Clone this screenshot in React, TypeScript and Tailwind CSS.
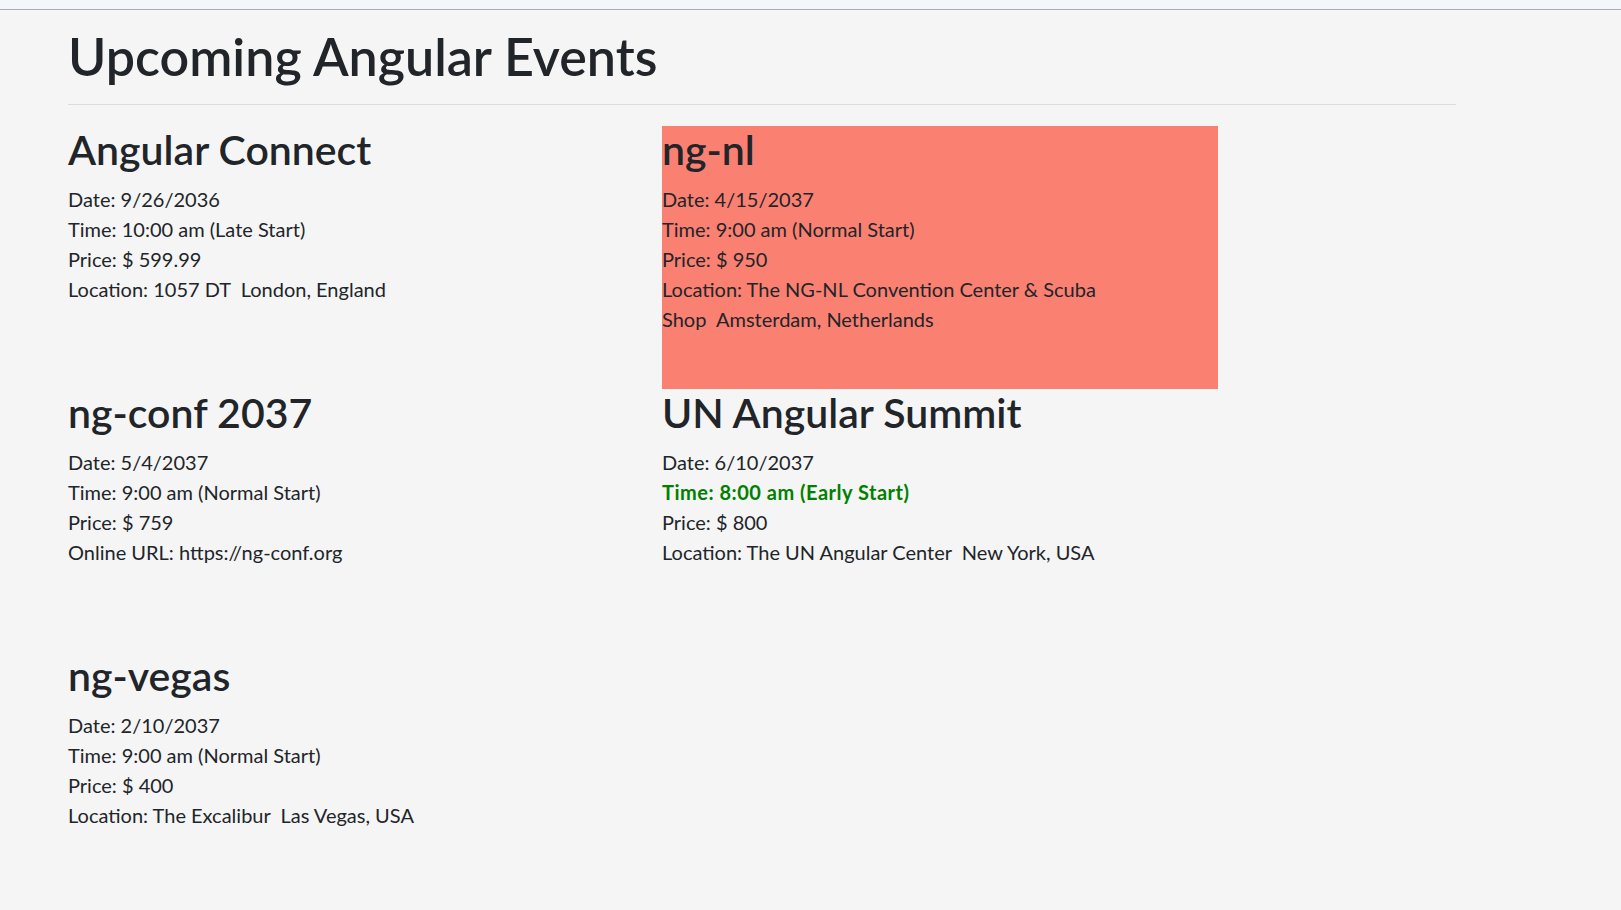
import React from "react";

type Ev = {
  name: string;
  date: string;
  time: string;
  timeClass: "normal" | "early" | "late";
  price: string;
  location?: { address: string; city: string; country: string };
  url?: string;
  highlight?: boolean;
};

const events: Ev[] = [
  {
    name: "Angular Connect",
    date: "9/26/2036",
    time: "10:00 am",
    timeClass: "late",
    price: "599.99",
    location: { address: "1057 DT", city: "London", country: "England" },
  },
  {
    name: "ng-nl",
    date: "4/15/2037",
    time: "9:00 am",
    timeClass: "normal",
    price: "950",
    location: {
      address: "The NG-NL Convention Center & Scuba Shop",
      city: "Amsterdam",
      country: "Netherlands",
    },
    highlight: true,
  },
  {
    name: "ng-conf 2037",
    date: "5/4/2037",
    time: "9:00 am",
    timeClass: "normal",
    price: "759",
    url: "https://ng-conf.org",
  },
  {
    name: "UN Angular Summit",
    date: "6/10/2037",
    time: "8:00 am",
    timeClass: "early",
    price: "800",
    location: { address: "The UN Angular Center", city: "New York", country: "USA" },
  },
  {
    name: "ng-vegas",
    date: "2/10/2037",
    time: "9:00 am",
    timeClass: "normal",
    price: "400",
    location: { address: "The Excalibur", city: "Las Vegas", country: "USA" },
  },
];

const startLabel = { normal: "Normal Start", early: "Early Start", late: "Late Start" };

function Card({ ev }: { ev: Ev }) {
  return (
    <div className={`h-[263px] w-[556px] ${ev.highlight ? "bg-[#fa8072]" : ""}`}>
      <h2 className="text-[41px] leading-[48px] font-semibold mb-[10px]">{ev.name}</h2>
      <div className="text-[20px] leading-[30px]">
        <div>Date: {ev.date}</div>
        <div className={ev.timeClass === "early" ? "text-[#008000] font-bold tracking-[0.5px]" : ""}>
          Time: {ev.time} ({startLabel[ev.timeClass]})
        </div>
        <div>Price: $ {ev.price}</div>
        {ev.location && (
          <div>
            {`Location: ${ev.location.address}\u00a0\u00a0${ev.location.city}, ${ev.location.country}`}
          </div>
        )}
        {ev.url && <div>Online URL: {ev.url}</div>}
      </div>
    </div>
  );
}

export default function App() {
  return (
    <div
      className="min-h-[910px] bg-[#f5f5f5] text-[#212529]"
      style={{ fontFamily: "Lato, 'Noto Sans', sans-serif" }}
    >
      <div className="h-[10px] bg-[#f3f7fc] border-b border-[#a9adb3]" />
      <div className="ml-[68px] w-[1388px]">
        <h1 className="text-[52px] leading-[60px] font-semibold mt-[16px] mb-[18px]">
          Upcoming Angular Events
        </h1>
        <div className="h-px bg-[#dcdcdc]" />
        <div className="mt-[21px] grid grid-cols-[556px_556px] gap-x-[38px]">
          {events.map((ev) => (
            <Card key={ev.name} ev={ev} />
          ))}
        </div>
      </div>
    </div>
  );
}
